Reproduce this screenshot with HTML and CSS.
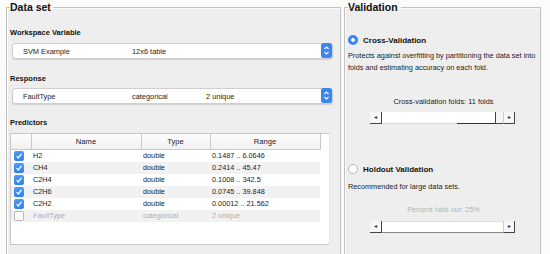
FILE: index.html
```html
<!DOCTYPE html>
<html>
<head>
<meta charset="utf-8">
<link rel="stylesheet" href="styles.css">
</head>
<body>
<div class="app">
  <fieldset class="panel panel-data">
    <legend>Data set</legend>
    <div class="label first">Workspace Variable</div>
    <div class="dropdown">
      <span class="dd-c1">SVM Example</span>
      <span class="dd-c2">12x6 table</span>
      <span class="dd-c3"></span>
      <svg class="dd-btn" width="11" height="15" viewBox="0 0 11 15"><rect x="0" y="0" width="11" height="15" rx="2.5" fill="#3d86f0"/><path d="M3.5 6 L5.5 4 L7.5 6" fill="none" stroke="#fff" stroke-width="1.1"/><path d="M3.5 9 L5.5 11 L7.5 9" fill="none" stroke="#fff" stroke-width="1.1"/></svg>
    </div>
    <div class="label second">Response</div>
    <div class="dropdown dd2">
      <span class="dd-c1">FaultType</span>
      <span class="dd-c2">categorical</span>
      <span class="dd-c3">2 unique</span>
      <svg class="dd-btn" width="11" height="15" viewBox="0 0 11 15"><rect x="0" y="0" width="11" height="15" rx="2.5" fill="#3d86f0"/><path d="M3.5 6 L5.5 4 L7.5 6" fill="none" stroke="#fff" stroke-width="1.1"/><path d="M3.5 9 L5.5 11 L7.5 9" fill="none" stroke="#fff" stroke-width="1.1"/></svg>
    </div>
    <div class="label third">Predictors</div>
    <div class="table-box">
      <table class="pred">
        <colgroup><col class="c-chk"><col class="c-name"><col class="c-type"><col class="c-range"></colgroup>
        <thead>
          <tr><th></th><th>Name</th><th>Type</th><th>Range</th></tr>
        </thead>
        <tbody>
          <tr><td><span class="chk on"><svg width="8" height="8" viewBox="0 0 8 8"><path d="M1.6 4.2 L3.3 5.9 L6.5 1.8" fill="none" stroke="#fff" stroke-width="1.3"/></svg></span></td><td>H2</td><td>double</td><td>0.1487 .. 6.0646</td></tr>
          <tr><td><span class="chk on"><svg width="8" height="8" viewBox="0 0 8 8"><path d="M1.6 4.2 L3.3 5.9 L6.5 1.8" fill="none" stroke="#fff" stroke-width="1.3"/></svg></span></td><td>CH4</td><td>double</td><td>0.2414 .. 45.47</td></tr>
          <tr><td><span class="chk on"><svg width="8" height="8" viewBox="0 0 8 8"><path d="M1.6 4.2 L3.3 5.9 L6.5 1.8" fill="none" stroke="#fff" stroke-width="1.3"/></svg></span></td><td>C2H4</td><td>double</td><td>0.1008 .. 342.5</td></tr>
          <tr><td><span class="chk on"><svg width="8" height="8" viewBox="0 0 8 8"><path d="M1.6 4.2 L3.3 5.9 L6.5 1.8" fill="none" stroke="#fff" stroke-width="1.3"/></svg></span></td><td>C2H6</td><td>double</td><td>0.0745 .. 39.848</td></tr>
          <tr><td><span class="chk on"><svg width="8" height="8" viewBox="0 0 8 8"><path d="M1.6 4.2 L3.3 5.9 L6.5 1.8" fill="none" stroke="#fff" stroke-width="1.3"/></svg></span></td><td>C2H2</td><td>double</td><td>0.00012 .. 21.562</td></tr>
          <tr class="disabled"><td><span class="chk off"></span></td><td>FaultType</td><td>categorical</td><td>2 unique</td></tr>
        </tbody>
      </table>
    </div>
  </fieldset>
  <fieldset class="panel panel-val">
    <legend>Validation</legend>
    <div class="radio-row r1"><span class="radio on"></span><span class="radio-label">Cross-Validation</span></div>
    <p class="desc d1">Protects against overfitting by partitioning the data set into<br>folds and estimating accuracy on each fold.</p>
    <div class="slider-label s1">Cross-validation folds: 11 folds</div>
    <div class="slider sl1">
      <span class="arrow left">&#9666;</span>
      <span class="track"></span>
      <span class="thumb"></span>
      <span class="arrow right">&#9656;</span>
    </div>
    <div class="radio-row r2"><span class="radio off"></span><span class="radio-label">Holdout Validation</span></div>
    <p class="desc d2">Recommended for large data sets.</p>
    <div class="slider-label s2 dim">Percent held out: 25%</div>
    <div class="slider sl2">
      <span class="arrow left">&#9666;</span>
      <span class="track"></span>
      <span class="arrow right">&#9656;</span>
    </div>
  </fieldset>
</div>
</body>
</html>
```
FILE: styles.css
```css
html, body {
  margin: 0;
  padding: 0;
  background: #fbfbfb;
  overflow: hidden;
  width: 550px;
  height: 254px;
}
body {
  font-family: "Liberation Sans", Arial, sans-serif;
  color: #1c1c1c;
}
.app {
  display: flex;
  gap: 3px;
  padding: 1px 9px 0 6px;
  height: 253px;
  overflow: hidden;
}
.panel {
  margin: 0;
  height: 290px;
  background: #eeeeee;
  border: 1px solid #c2c2c2;
  box-shadow: inset 1px 1px 0 #fafafa, 1px 1px 0 #fafafa;
  min-width: 0;
  box-sizing: border-box;
}
.panel legend {
  font-weight: bold;
  font-size: 10.5px;
  line-height: 12px;
  padding: 0 3px 0 0;
  color: #111;
}
.panel-data {
  width: 335px;
  padding: 0 4px 0 3px;
}
.panel-val {
  width: 197px;
  padding: 0 3px 0 3px;
}
.label {
  font-weight: bold;
  font-size: 7.5px;
  line-height: 10px;
  color: #111;
}
.label.first { margin-top: 15px; }
.label.second { margin-top: 15px; }
.label.third { margin-top: 14px; }

.dropdown {
  display: grid;
  grid-template-columns: 109px 74px 1fr 11px;
  align-items: center;
  height: 16px;
  box-sizing: border-box;
  margin: 5px 3px 0 2px;
  padding-left: 10px;
  background: #fff;
  border: 1px solid #cfcfcf;
  border-radius: 3px;
  box-shadow: 0 1px 1px rgba(0,0,0,0.12);
  font-size: 7.4px;
  color: #222;
}
.dropdown.dd2 { margin-top: 4px; }
.dd-btn {
  display: block;
  margin-top: -1px;
  margin-right: -1px;
}
.table-box {
  margin: 5px 6px 0 0;
  width: 320px;
  height: 112px;
  box-sizing: border-box;
  background: #fff;
  border: 1px solid #c8c8c8;
  border-right-color: #e2e2e2;
}
.pred {
  border-collapse: collapse;
  table-layout: fixed;
  width: 309px;
  font-size: 7.3px;
  color: #222;
}
.c-chk { width: 20px; }
.c-name { width: 110px; }
.c-type { width: 69px; }
.c-range { width: 110px; }
.pred th {
  height: 15px;
  padding: 0;
  font-weight: normal;
  font-size: 7.6px;
  text-align: center;
  background: linear-gradient(#fdfdfd, #f1f1f1);
  border-bottom: 1px solid #c9c9c9;
  border-right: 1px solid #c9c9c9;
  box-sizing: border-box;
}
.pred td {
  height: 12px;
  padding: 0 0 0 2px;
  white-space: nowrap;
}
.pred td:first-child { padding: 0 0 0 3px; text-align: left; }
.pred tbody tr:nth-child(even) td { background: #f2f2f2; }
.pred tr.disabled td { color: #b0b0b0; }
.chk {
  display: inline-flex;
  align-items: center;
  justify-content: center;
  width: 10px;
  height: 10px;
  box-sizing: border-box;
  border-radius: 2px;
  vertical-align: middle;
}
.chk.on {
  background: linear-gradient(#4f9bfa, #2f7ff0);
}
.chk.off {
  background: #fff;
  border: 1px solid #b9b9b9;
}

.radio-row {
  display: flex;
  align-items: center;
  height: 12px;
  gap: 5px;
}
.radio-row.r1 { margin-top: 21px; }
.radio-row.r2 { margin-top: 39px; }
.radio {
  width: 10px;
  height: 10px;
  border-radius: 50%;
  box-sizing: border-box;
  flex: none;
}
.radio.on {
  background: radial-gradient(circle, #fff 0 1.6px, #3a86f2 2.1px);
}
.radio.off {
  background: #fff;
  border: 1px solid #b5b5b5;
}
.radio-label {
  font-weight: bold;
  font-size: 8px;
  color: #111;
}
.desc {
  margin: 0;
  font-size: 7.3px;
  line-height: 11.5px;
  color: #1c1c1c;
  white-space: nowrap;
}
.desc.d1 { margin-top: 4px; }
.desc.d2 { margin-top: 6px; }
.slider-label {
  text-align: center;
  font-size: 7.4px;
  line-height: 10px;
  color: #1c1c1c;
  padding-left: 2px;
}
.slider-label.s1 { margin-top: 24px; }
.slider-label.s2 { margin-top: 12px; }
.slider-label.dim { color: #b4b4b4; }
.slider {
  display: flex;
  width: 145px;
  height: 12px;
  margin: 5px 0 0 22px;
  box-sizing: border-box;
}
.slider.sl2 { margin-top: 6px; }
.arrow {
  width: 12px;
  flex: none;
  box-sizing: border-box;
  font-size: 6px;
  line-height: 11px;
  text-align: center;
  color: #333;
  background: #f6f6f6;
  border-bottom: 1px solid #444;
}
.arrow.left { border-right: 1px solid #444; }
.arrow.right { border-right: 1px solid #444; border-left: 1px solid #d0d0d0; }
.track {
  flex: 1;
  background: #fff;
  border-top: 1px solid #e0e0e0;
  border-bottom: 1px solid #8a8a8a;
  box-sizing: border-box;
}
.sl1 .track {
  border-top: 0;
  border-bottom: 1px solid;
  border-image: linear-gradient(to right, #d8d8d8 0 66%, #333 66% 100%) 1;
}
.thumb {
  width: 8px;
  flex: none;
  box-sizing: border-box;
  background: #f4f4f4;
  border-left: 1px solid #444;
  border-bottom: 1px solid #444;
}
```
